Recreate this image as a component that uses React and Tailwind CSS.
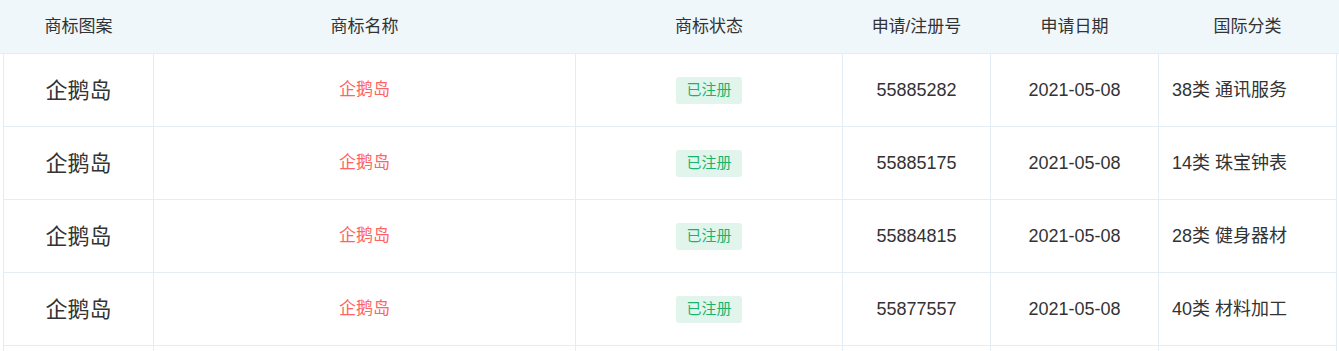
const rows = [
  { no: '55885282', date: '2021-05-08', cls: '38类 通讯服务' },
  { no: '55885175', date: '2021-05-08', cls: '14类 珠宝钟表' },
  { no: '55884815', date: '2021-05-08', cls: '28类 健身器材' },
  { no: '55877557', date: '2021-05-08', cls: '40类 材料加工' },
];

const cols = 'grid grid-cols-[150px_422px_267px_148px_168px_178px]';
const cell = 'flex items-center justify-center border-r border-[#e3edf6]';

export default function App() {
  return (
    <div
      className="w-[1339px] h-[351px] overflow-hidden bg-white text-[#333]"
      style={{ fontFamily: '"Liberation Sans", "Noto Sans CJK SC", sans-serif' }}
    >
      {/* Header */}
      <div className="h-[54px] bg-[#f0f7fb] border-b border-[#e3edf6]">
        <div className={`${cols} ml-[4px] h-full text-[17px] items-center text-center`}>
          <div className="pr-px">商标图案</div>
          <div className="pr-px">商标名称</div>
          <div className="pr-px">商标状态</div>
          <div className="pr-px">申请/注册号</div>
          <div className="pr-px">申请日期</div>
          <div className="pr-px">国际分类</div>
        </div>
      </div>

      {/* Body */}
      <div className="ml-[3px] w-[1334px] border-l border-[#e3edf6]">
        {rows.map((r) => (
          <div key={r.no} className={`${cols} h-[73px] border-b border-[#e3edf6] text-[18px]`}>
            <div className={`${cell} text-[22px] text-[#333]`}>企鹅岛</div>
            <div className={`${cell} text-[17px] text-[#ff6464]`}>企鹅岛</div>
            <div className={cell}>
              <span className="h-[27px] px-[10px] flex items-center rounded-[3px] bg-[#e1f5ec] text-[#19b36e] text-[15px]">
                已注册
              </span>
            </div>
            <div className={cell}>{r.no}</div>
            <div className={cell}>{r.date}</div>
            <div className="flex items-center pl-[13px] border-r border-[#e3edf6]">{r.cls}</div>
          </div>
        ))}
        {/* next row, below the visible area */}
        <div className={`${cols} h-[73px]`}>
          <div className={cell} />
          <div className={cell} />
          <div className={cell} />
          <div className={cell} />
          <div className={cell} />
          <div className={cell} />
        </div>
      </div>
    </div>
  );
}
